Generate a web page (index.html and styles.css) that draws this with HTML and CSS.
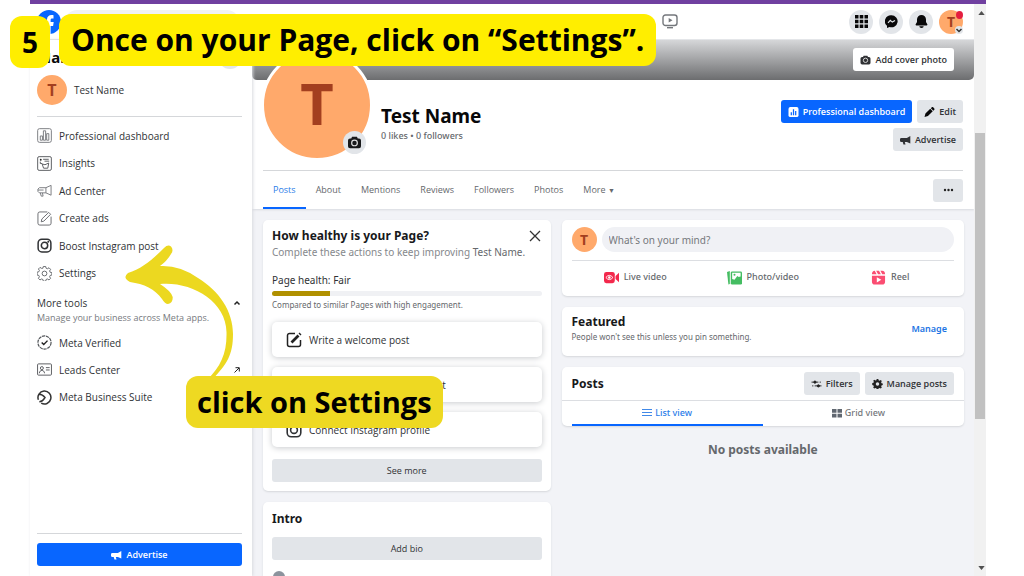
FILE: index.html
```html
<!DOCTYPE html>
<html lang="en">
<head>
<meta charset="utf-8">
<title>Test Name | Page settings guide</title>
<link rel="stylesheet" href="styles.css">
</head>
<body>
<svg width="0" height="0" class="defs" aria-hidden="true">
  <symbol id="horn" viewBox="0 0 16 14"><path d="M15 1v11l-5-2H7l1 3.500H5L4 10H2a2 2 0 0 1-2-2V6a2 2 0 0 1 2-2h8z" fill="currentColor"/></symbol>
  <symbol id="camera" viewBox="0 0 16 16"><path d="M5 1h6l1 2h1.500A2.500 2.500 0 0 1 16 5.500v7a2.500 2.500 0 0 1-2.500 2.500h-11A2.500 2.500 0 0 1 0 12.500v-7A2.500 2.500 0 0 1 2.500 3H4z" fill="currentColor"/><circle cx="8" cy="8.500" r="3.500" fill="none" stroke="#ddd" stroke-width="1.500"/></symbol>
  <symbol id="insta" viewBox="0 0 16 16"><g fill="none" stroke="currentColor" stroke-width="1.600"><rect x="1.200" y="1.200" width="13.600" height="13.600" rx="4"/><circle cx="8" cy="8" r="3.400"/></g><circle cx="12" cy="4" r="1" fill="currentColor"/></symbol>
  <symbol id="gear" viewBox="0 0 16 16" overflow="visible"><path d="M6.700 0h2.600l.5 2 1.500.6 1.800-1.100 1.800 1.800-1.100 1.800.6 1.500 2 .5v2.600l-2 .5-.6 1.500 1.100 1.800-1.800 1.800-1.800-1.100-1.500.6-.5 2H6.700l-.5-2-1.500-.6-1.800 1.100-1.800-1.800 1.100-1.800-.6-1.500-2-.5V6.500l2-.5.600-1.500L1.100 2.900l1.800-1.800 1.800 1.100L6.200 2z"/></symbol>
</svg>

<div class="app">
  <header class="topbar">
    <a class="logo" href="#" aria-label="Facebook">
      <svg viewBox="0 0 24 24"><circle cx="12" cy="12" r="12" fill="#0866ff"/><path d="M10 24v-8H7v-4h3V9.500C10 6.500 12 5 14.500 5c1 0 2 .2 2 .2v3.300h-1.300c-1.200 0-1.600.7-1.600 1.500v2h3.100l-.6 4h-2.500v8z" fill="#fff"/></svg>
    </a>
    <input class="search" type="search" aria-label="Search Facebook">
    <a class="watch" href="#" aria-label="Video">
      <svg viewBox="0 0 16 15" fill="none" stroke="#74777c" stroke-width="1.400"><rect x="1" y="1" width="14" height="10.500" rx="2.500"/><path d="M5 13.700h6"/><path d="M6.700 4v4.500L10.500 6.200z" fill="#74777c" stroke="none"/></svg>
    </a>
    <nav class="top-actions">
      <button class="round" aria-label="Menu"><svg viewBox="0 0 13 13" fill="#080809"><path d="M0 0h3.500v3.500H0zM4.700 0h3.600v3.500H4.700zM9.500 0H13v3.500H9.500zM0 4.700h3.500v3.600H0zM4.700 4.700h3.600v3.600H4.700zM9.500 4.700H13v3.600H9.500zM0 9.500h3.500V13H0zM4.700 9.500h3.600V13H4.700zM9.500 9.500H13V13H9.500z"/></svg></button>
      <button class="round" aria-label="Messenger"><svg viewBox="0 0 13 13"><path d="M6.500.3a6.200 6 0 1 1-2 11.700L2 13v-2.200A6.200 6 0 0 1 6.500.3z" fill="#080809"/><path d="M3 7.800l2.300-2.400 2 1.700L10 5.400" fill="none" stroke="#e2e5e9" stroke-width="1.200"/></svg></button>
      <button class="round" aria-label="Notifications"><svg viewBox="0 0 13 13" fill="#080809"><path d="M6.500 0a4.500 4.500 0 0 1 4.500 4.500V7l1.300 2.300c.3.700 0 1.200-.7 1.200H1.400c-.7 0-1-.5-.7-1.200L2 7V4.500A4.500 4.500 0 0 1 6.500 0zM4.300 11.300h4.400a2.200 1.700 0 0 1-4.400 0z"/></svg></button>
      <button class="round account" aria-label="Account">T<span class="alert"></span><span class="caret"><svg viewBox="0 0 8 8" fill="none" stroke="#333" stroke-width="1.500"><path d="M1.500 3l2.500 2.500L6.500 3"/></svg></span></button>
    </nav>
  </header>

  <div class="body">
    <aside class="sidebar">
      <div class="side-head"><h2>Manage Page</h2><button class="round" aria-label="Page options"></button></div>
      <a class="side-page" href="#"><span class="avatar">T</span>Test Name</a>
      <nav class="menu six">
        <a href="#"><svg viewBox="0 0 16 16" fill="none" stroke="#777a7e"><rect x=".7" y=".7" width="14.600" height="14.600" rx="2"/><path d="M3.500 13V8.500h2.300V13zM6.800 13V3h2.400v10zM10.300 13V6h2.300v7z"/></svg>Professional dashboard</a>
        <a href="#"><svg viewBox="0 0 16 16" fill="none" stroke="#55585c"><rect x=".7" y=".7" width="14.600" height="14.600" rx="1.500"/><path d="M6.500 3.500h6M8 5.500h5M3.500 6v2h2M5.500 8.500l3 .8 4-1.800-1 5.500H7z"/><circle cx="4" cy="4" r="1" fill="#222" stroke="none"/></svg>Insights</a>
        <a href="#"><svg viewBox="0 0 16 16" fill="none" stroke="#777a7e"><path d="M15 2.500v10.500L9.500 10.500H2.500L1 9V6.500L2.500 5h7zM9.500 5v5.500M3.500 10.500l1 3.500h2l-.7-3.500M1 7.500h6"/></svg>Ad Center</a>
        <a href="#"><svg viewBox="0 0 16 16" fill="none" stroke="#66696d"><path d="M11 1H3a2 2 0 0 0-2 2v10a2 2 0 0 0 2 2h10a2 2 0 0 0 2-2V6M4.500 11.500l.7-3 7.300-7 2 2-7.200 7.300z"/></svg>Create ads</a>
        <a href="#"><svg class="dark"><use href="#insta"/></svg>Boost Instagram post</a>
        <a href="#"><svg viewBox="-.5 -.5 17 17" fill="none" stroke="#66696d" stroke-width="1.100"><use href="#gear" x="0" y="0" width="16" height="16"/><circle cx="8" cy="8" r="2.700"/></svg>Settings</a>
      </nav>
      <div class="tools-head">
        <div><h3>More tools</h3><p>Manage your business across Meta apps.</p></div>
        <svg class="mini" viewBox="0 0 8 8" fill="none" stroke="#222" stroke-width="1.500"><path d="M1.500 5.500L4 3l2.500 2.500"/></svg>
      </div>
      <nav class="menu three">
        <a href="#"><svg viewBox="0 0 16 16" fill="none" stroke="#55585c"><circle cx="8" cy="8" r="7" stroke-width="1.300" stroke-dasharray="3.500 .8"/><path d="M5 8l2.200 2.200 4-4.200" stroke="#222" stroke-width="1.500"/></svg>Meta Verified</a>
        <a href="#"><svg viewBox="0 0 16 16" fill="none" stroke="#55585c"><rect x=".6" y="2" width="14.800" height="12" rx="1"/><circle cx="5.200" cy="6.500" r="1.600"/><path d="M2.500 12c0-4 5.500-4 5.500 0M9.500 6h4M9.500 8.500h4"/></svg>Leads Center<svg class="mini end" viewBox="0 0 8 8" fill="none" stroke="#222" stroke-width="1"><path d="M1.500 6.500L6 2M2.500 1.700h3.800v3.800"/></svg></a>
        <a href="#"><svg viewBox="0 0 16 16" fill="none" stroke="#333" stroke-width="1.600"><path d="M4.500 14A6.900 6.900 0 1 0 1.500 10.500M2.500 4.500C5 4.500 7 6 8.500 8 7 10.500 5 12.500 2.500 12.500"/></svg>Meta Business Suite</a>
      </nav>
      <div class="side-foot"><button class="btn primary"><svg><use href="#horn"/></svg>Advertise</button></div>
    </aside>

    <main class="main">
      <section class="profile">
        <div class="cover"><button class="btn light"><svg><use href="#camera"/></svg>Add cover photo</button></div>
        <div class="identity">
          <div class="portrait">T<button aria-label="Update profile picture"><svg><use href="#camera"/></svg></button></div>
          <div class="names"><h1>Test Name</h1><p>0 likes • 0 followers</p></div>
          <div class="actions">
            <button class="btn primary"><svg viewBox="0 0 16 16"><rect width="16" height="16" rx="3" fill="#fff"/><path d="M4.500 13V8.500M8 13V3.500M11.500 13V6.500" stroke="#0866ff" stroke-width="2"/></svg>Professional dashboard</button>
            <button class="btn"><svg viewBox="0 0 16 16" fill="#080809"><path d="M0 16l1.500-5.500 7.700-7.700 4 4L5.500 14.500zM10.200 1.800L12 0c1.500-.5 4.500 2.500 4 4l-1.800 1.800z"/></svg>Edit</button>
            <button class="btn"><svg><use href="#horn"/></svg>Advertise</button>
          </div>
        </div>
        <div class="tabbar">
          <nav class="tabs">
            <a class="on" href="#">Posts</a><a href="#">About</a><a href="#">Mentions</a><a href="#">Reviews</a><a href="#">Followers</a><a href="#">Photos</a><a href="#">More <span class="tri">▼</span></a>
          </nav>
          <button class="btn dots" aria-label="More options"><svg viewBox="0 0 10 4" fill="#222"><circle cx="1.500" cy="2" r="1.200"/><circle cx="5" cy="2" r="1.200"/><circle cx="8.500" cy="2" r="1.200"/></svg></button>
        </div>
      </section>

      <div class="columns">
        <div class="col">
          <section class="card health">
            <div class="card-head"><h2>How healthy is your Page?</h2><button class="close" aria-label="Close"><svg viewBox="0 0 12 12" stroke="#333" stroke-width="1.300"><path d="M1 1l10 10M11 1L1 11"/></svg></button></div>
            <p class="lead">Complete these actions to keep improving <span>Test Name.</span></p>
            <p class="score">Page health: Fair</p>
            <div class="meter"><span style="width:21.5%"></span></div>
            <p class="note">Compared to similar Pages with high engagement.</p>
            <div class="tasks">
              <button><svg viewBox="0 0 16 16" fill="none" stroke="#222" stroke-width="1.500"><path d="M9 1.500H3.500a2 2 0 0 0-2 2v9a2 2 0 0 0 2 2h9a2 2 0 0 0 2-2V8"/><path d="M5.500 10.500l7-7M13.500 2.500l1-1" stroke-width="2.800"/></svg>Write a welcome post</button>
              <button><svg viewBox="0 0 16 16" fill="none" stroke="#222" stroke-width="1.500"><circle cx="8" cy="8" r="6.500"/></svg>Connect a WhatsApp account</button>
              <button><svg><use href="#insta"/></svg>Connect Instagram profile</button>
            </div>
            <button class="btn wide">See more</button>
          </section>
          <section class="card intro">
            <h2>Intro</h2>
            <button class="btn wide">Add bio</button>
            <svg class="info" viewBox="0 0 12 12"><circle cx="6" cy="6" r="6" fill="#8c939d"/></svg>
          </section>
        </div>

        <div class="col">
          <section class="card composer">
            <div class="ask"><span class="avatar">T</span><input type="text" placeholder="What's on your mind?" aria-label="What's on your mind?"></div>
            <div class="kinds">
              <button><svg viewBox="0 0 16 16"><rect y="2" width="11.500" height="12" rx="2.500" fill="#f3284c"/><path d="M12.300 6.500L16 3v10l-3.700-3.500z" fill="#f3284c"/><path d="M2 8q3.700-4.500 7.500 0-3.800 4.500-7.500 0z" fill="none" stroke="#fff"/><circle cx="5.700" cy="8" r="1.300" fill="#fff"/></svg>Live video</button>
              <button><svg viewBox="0 0 16 16"><path d="M0 2l3-1v14l-1.500.5z" fill="#45bd62"/><rect x="4" y="1.500" width="12" height="14" rx="1.500" fill="#45bd62"/><path d="M5.500 3h9v4l-2 .5-1.500-1-3 4-2.500-1z" fill="#fff"/><circle cx="8" cy="5" r="1.100" fill="#45bd62"/></svg>Photo/video</button>
              <button><svg viewBox="0 0 16 16" fill="#fb4d72"><path d="M1 4.500Q1 1 4 .8l2 3.700zM5.500.8h3l2 3.700h-3zM10 .8h2q3 .2 3 3.700h-3zM1 6h14v6.500a3 3 0 0 1-3 3H4a3 3 0 0 1-3-3z"/><path d="M6.200 7.700v5.600L11 10.500z" fill="#fff"/></svg>Reel</button>
            </div>
          </section>
          <section class="card featured">
            <div><h2>Featured</h2><p>People won't see this unless you pin something.</p></div>
            <a href="#">Manage</a>
          </section>
          <section class="card posts">
            <div class="posts-head">
              <h2>Posts</h2>
              <button class="btn"><svg viewBox="0 0 16 16" fill="#222" stroke="#222" stroke-width="1.500"><path d="M0 5h11M5 11h11M13 5h2M1 11h2"/><circle cx="5.500" cy="5" r="1.800"/><circle cx="11" cy="11" r="1.800"/></svg>Filters</button>
              <button class="btn"><svg viewBox="0 0 16 16" fill="#222"><use href="#gear"/><circle cx="8" cy="8" r="2.800" fill="#e2e5e9"/></svg>Manage posts</button>
            </div>
            <nav class="views">
              <a class="on" href="#"><svg viewBox="0 0 10 10" stroke="#4189e8" stroke-width="1"><path d="M0 1.500h10M0 4.500h10M0 7.500h10"/></svg>List view</a>
              <a href="#"><svg viewBox="0 0 10 10" fill="#606770"><path d="M0 1h4.500v3.700H0zM5.500 1H10v3.700H5.500zM0 5.700h4.500v3.800H0zM5.500 5.700H10v3.800H5.500z"/></svg>Grid view</a>
            </nav>
          </section>
          <p class="empty">No posts available</p>
        </div>
      </div>
    </main>
  </div>
  <div class="scrollbar">
    <svg viewBox="0 0 8 5"><path d="M0 5l4-5 4 5z"/></svg>
    <div class="track"><div class="thumb"></div></div>
    <svg viewBox="0 0 8 5"><path d="M0 0l4 5 4-5z"/></svg>
  </div>
</div>

<svg class="arrow" viewBox="125 245 112 136" aria-hidden="true"><path d="M128 273 C142 269 154 258 164 248 Q168 244 171 246.500 Q174 250 171 254 Q167 261 160 266 Q180 265 198 278 C219 291 233 311 233 334 C233 355 227 364 212 380 L207 380 C221 366 227 353 226.500 332 C226 300 190 281 160 284 Q171 291 172.700 297 Q173 303 168 304 Q165 304 162 299 C155 289 144 284 130 282 Q122 278 128 273z" fill="#ecd820"/></svg>
<div class="callout step">5</div>
<div class="callout banner">Once on your Page, click on “Settings”.</div>
<div class="callout hint">click on Settings</div>
</body>
</html>
```

FILE: styles.css
```css
* { box-sizing: border-box; }
body {
  margin: 0;
  padding: 0 38px 0 30px;
  background: #fff;
  color: #303235;
  font-family: "Noto Sans", "Open Sans", sans-serif;
  font-size: 10px;
  line-height: 14px;
  height: 100vh;
  overflow: hidden;
  position: relative;
}
h1, h2, h3, p { margin: 0; }
a { color: inherit; text-decoration: none; }
button, input { font: inherit; color: inherit; border: 0; padding: 0; }
svg { display: block; flex: none; }
.defs { position: absolute; }

.app {
  height: 100vh;
  border-top: 4px solid #7040a0;
  display: grid;
  grid-template: 36px minmax(0, 1fr) / minmax(0, 1fr) 12px;
}
.topbar {
  display: grid;
  grid-template-columns: 24px 174px 8fr 3fr auto;
  align-items: center;
  gap: 4px;
  padding: 0 11px 0 7px;
  border-bottom: 1px solid #e4e6e9;
}
.logo svg { width: 24px; height: 24px; }
.search { width: 100%; height: 24px; border-radius: 12px; background: #f0f2f5; }
.watch { justify-self: end; }
.watch svg { width: 16px; height: 15px; }
.top-actions { grid-column: 5; display: flex; gap: 6px; }
.round {
  width: 24px; height: 24px;
  border-radius: 50%;
  background: #e2e5e9;
  display: flex; align-items: center; justify-content: center;
}
.round svg { width: 13px; height: 13px; }
.account { position: relative; background: #ffa96b; color: #a33f1f; font-size: 14px; font-weight: 700; }
.alert { position: absolute; top: 1px; right: 0; width: 7px; height: 8px; border-radius: 50%; background: #e41e3f; }
.caret { position: absolute; right: 0; bottom: 0; width: 8px; height: 8px; border-radius: 50%; background: #e2e5e9; }
.caret svg { width: 8px; height: 8px; }

.scrollbar {
  grid-column: 2; grid-row: 1 / 3;
  background: #f1f1f1;
  display: flex; flex-direction: column; align-items: center;
  padding: 7px 0 6px;
}
.scrollbar svg { width: 7px; height: 4px; fill: #505050; margin-left: 2px; }
.track { flex: 1; width: 10px; padding-top: 118px; }
.thumb { height: 286px; background: #c1c1c1; }

.body { display: grid; grid-template-columns: 222px minmax(0, 1fr); min-height: 0; }
.sidebar {
  display: flex; flex-direction: column;
  padding: 4px 10px 10px 7px;
  box-shadow: 1px 0 3px #d8dadf;
  z-index: 1;
  background: #fff;
}
.side-head { display: flex; align-items: center; justify-content: space-between; height: 26px; }
.side-head h2 { font-size: 15px; color: #080809; }
.side-page {
  display: flex; align-items: center; gap: 7px;
  padding: 5px 0 11px;
  margin-bottom: 5px;
  border-bottom: 1px solid #d5d7da;
  font-family: "Open Sans", sans-serif;
  font-size: 10px; font-weight: 500;
}
.avatar {
  width: 30px; height: 30px;
  border-radius: 50%;
  background: #ffa96b;
  color: #a33f1f;
  font-size: 16px; font-weight: 700;
  display: flex; align-items: center; justify-content: center;
  flex: none;
}
.menu { display: grid; grid-auto-rows: 1fr; font-family: "Open Sans", sans-serif; font-size: 10px; font-weight: 500; }
.six { height: 165px; }
.three { height: 82px; }
.menu a { display: flex; align-items: center; gap: 7px; }
.menu svg { width: 15px; height: 15px; }
.menu .mini, .mini { width: 8px; height: 8px; margin: 3px 1px 0 0; }
.menu .end { margin: 0 1px 0 auto; }
.tools-head { display: flex; justify-content: space-between; padding: 9px 0 4px; }
.tools-head h3 { font-family: "Open Sans", sans-serif; font-size: 10px; font-weight: 500; line-height: 15px; }
.tools-head p { font-family: "Open Sans", sans-serif; font-size: 9px; color: #777a7e; }
.side-foot { margin-top: auto; border-top: 1px solid #d5d7da; padding-top: 9px; display: grid; }

.btn {
  height: 23px;
  border-radius: 3px;
  background: #e2e5e9;
  font-family: "Open Sans", sans-serif;
  font-size: 9px; font-weight: 600;
  display: flex; align-items: center; justify-content: center; gap: 4px;
  padding: 0 7px;
  white-space: nowrap;
}
.btn svg { width: 11px; height: 10px; }
.primary { background: #0866ff; color: #fff; }
.light { background: #fff; }
.wide { width: 100%; font-weight: 500; }

.main { background: #f2f3f7; min-width: 0; overflow: hidden; }
.profile { background: #fff; box-shadow: 0 1px 2px #d8dadf; }
.cover {
  height: 40px;
  border-radius: 0 0 5px 5px;
  background: linear-gradient(#d6d7d9, #6c6d6f);
  display: flex; justify-content: flex-end;
  padding: 8px 20px 0 0;
}
.identity {
  display: flex;
  margin: 0 11px;
  height: 91px;
  border-bottom: 1px solid #d5d7da;
}
.portrait {
  position: relative;
  width: 112px; height: 112px;
  margin: -31px 8px 0 -2px;
  border: 3px solid #fff;
  border-radius: 50%;
  background: #ffa96b;
  color: #a33f1f;
  font-size: 58px; line-height: 102px; font-weight: 700;
  text-align: center;
  flex: none;
}
.portrait button {
  position: absolute; right: 4px; bottom: 4px;
  width: 23px; height: 23px;
  border-radius: 50%;
  background: #e2e5e9;
  color: #18191b;
  display: flex; align-items: center; justify-content: center;
}
.portrait button svg { width: 13px; height: 13px; }
.names { padding-top: 23px; }
.names h1 { font-size: 19px; line-height: 26px; color: #080809; }
.names p { font-size: 9px; font-weight: 500; color: #65686c; }
.actions {
  margin-left: auto; padding-top: 20px;
  display: flex; flex-wrap: wrap; justify-content: flex-end; align-content: flex-start; gap: 5px;
  max-width: 190px;
}
.tabbar { display: flex; justify-content: space-between; align-items: center; padding: 0 11px; height: 38px; }
.tabs { display: flex; height: 38px; font-family: "Open Sans", sans-serif; font-size: 9px; font-weight: 500; color: #65686c; }
.tabs a { padding: 0 10px; line-height: 38px; border-bottom: 2px solid transparent; }
.tabs .on { color: #2b7de9; border-color: #0866ff; }
.tri { font-size: 7px; }
.dots { width: 30px; }
.dots svg { height: 4px; }

.columns { display: grid; grid-template-columns: 5fr 7fr; gap: 11px; padding: 11px 10px 0 11px; }
.col { display: flex; flex-direction: column; gap: 11px; min-width: 0; }
.card { background: #fff; border-radius: 5px; box-shadow: 0 1px 2px #d5d7db; padding: 9px; }
.card h2 { font-size: 12px; line-height: 16px; color: #18191b; }
.health { padding-top: 8px; }
.card-head { display: flex; justify-content: space-between; }
.close { background: none; padding: 0 1px 0 0; }
.close svg { width: 12px; height: 12px; }
.lead { font-size: 10px; line-height: 17px; color: #85888c; }
.lead span { color: #65686c; }
.score { padding-top: 12px; line-height: 14px; }
.meter { height: 5px; border-radius: 3px; background: #f0f1f4; margin: 4px 0 3px; overflow: hidden; }
.meter span { display: block; height: 5px; background: #b09000; }
.note { font-size: 8px; line-height: 12px; color: #65686c; }
.tasks { display: grid; gap: 10px; padding: 11px 0 12px; }
.tasks button {
  height: 35px;
  border-radius: 5px;
  background: #fff;
  box-shadow: 0 1px 6px #c8cacd;
  display: flex; align-items: center; gap: 7px;
  padding-left: 14px;
  font-family: "Open Sans", sans-serif;
  font-size: 10px; font-weight: 500;
}
.tasks svg { width: 16px; height: 16px; }
.intro .btn { margin: 10px 0 11px; }
.intro .info { width: 12px; height: 12px; margin-left: 1px; }

.composer { padding: 7px 10px; }
.ask { display: flex; gap: 5px; padding-bottom: 8px; border-bottom: 1px solid #dcdee2; }
.ask .avatar { width: 25px; height: 25px; font-size: 14px; }
.ask input { flex: 1; min-width: 0; height: 25px; border-radius: 13px; background: #f0f1f5; padding: 0 7px; }
.ask input::placeholder { color: #75787c; opacity: 1; }
.kinds { display: grid; grid-template-columns: repeat(3, 1fr); padding: 4px 0 0; }
.kinds button { display: flex; align-items: center; justify-content: center; gap: 5px; height: 24px; background: none; font-size: 9px; font-weight: 500; color: #65686c; }
.kinds svg { width: 15px; height: 15px; }
.featured { display: flex; align-items: center; justify-content: space-between; padding: 7px 17px 12px 10px; }
.featured p { font-size: 8px; color: #65686c; }
.featured a { font-size: 9px; font-weight: 600; color: #1b74e4; }
.posts { padding: 0; }
.posts-head { display: flex; align-items: center; gap: 5px; padding: 5px 10px; border-bottom: 1px solid #dcdee2; }
.posts-head h2 { flex: 1; }
.views { display: grid; grid-template-columns: 1fr 1fr; padding: 0 10px; font-size: 9px; font-weight: 500; color: #75787c; }
.views a { display: flex; align-items: center; justify-content: center; gap: 3px; height: 25px; border-bottom: 2px solid transparent; }
.views .on { color: #2b7de9; border-color: #0866ff; }
.views svg { width: 10px; height: 10px; }
.empty { text-align: center; font-size: 12px; font-weight: 700; color: #65686c; padding-top: 6px; }

.arrow { position: absolute; left: 125px; top: 245px; width: 112px; height: 136px; z-index: 2; }
.callout {
  position: absolute; z-index: 3;
  border-radius: 12px;
  background: #ffee00;
  color: #000;
  font-family: "Open Sans", "Noto Sans", sans-serif;
  font-size: 30px; font-weight: 700; line-height: 52px;
  padding: 0 12px;
  white-space: nowrap;
}
.step { left: 10px; top: 16px; font-size: 28px; }
.banner { left: 59px; top: 14px; }
.hint { left: 186px; top: 376px; font-size: 29px; padding: 0 11px; background: #eed922; }
```
